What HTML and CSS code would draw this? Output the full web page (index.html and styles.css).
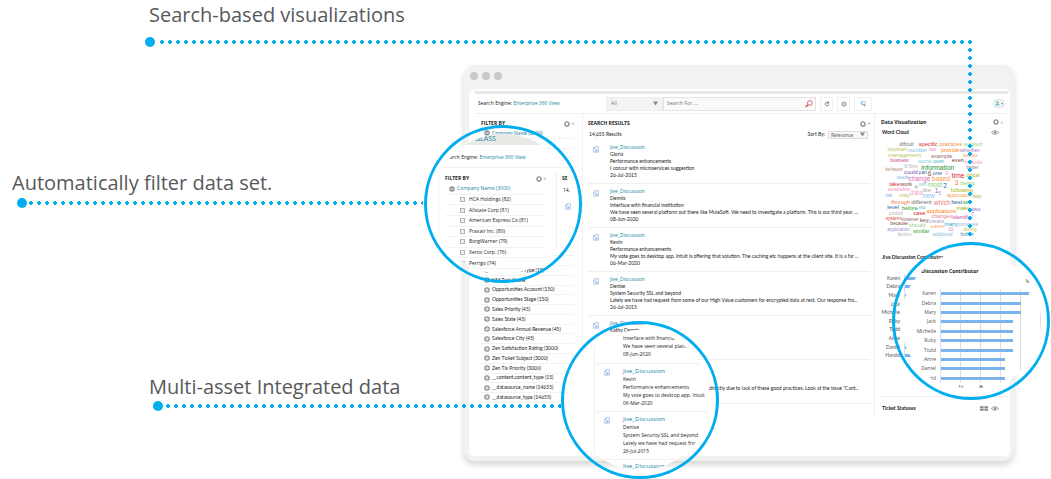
FILE: index.html
```html
<!DOCTYPE html>
<html lang="en">
<head>
<meta charset="utf-8">
<title>Enterprise 360 View</title>
<link rel="stylesheet" href="styles.css">
</head>
<body>
<svg class="defs" aria-hidden="true">
  <symbol id="gear" viewBox="0 0 12 12"><circle cx="6" cy="6" r="4" fill="none" stroke="#8a8a8a" stroke-width="2.200"/><path d="M6 0v2M6 10v2M0 6h2M10 6h2M1.8 1.8l1.4 1.4M8.8 8.8l1.4 1.4M10.2 1.8L8.8 3.2M3.2 8.8l-1.4 1.4" stroke="#8a8a8a" stroke-width="1.8"/></symbol>
  <symbol id="plus" viewBox="0 0 12 12"><circle cx="6" cy="6" r="5.6" fill="#8f8f8f"/><path d="M6 2.5v7M2.5 6h7" stroke="#fff" stroke-width="1.8"/></symbol>
  <symbol id="minus" viewBox="0 0 12 12"><circle cx="6" cy="6" r="5.6" fill="#8f8f8f"/><path d="M2.5 6h7" stroke="#fff" stroke-width="1.8"/></symbol>
  <symbol id="doc" viewBox="0 0 18 20"><path d="M6 1.500H16V18H2V6zM6 2v5H2" fill="#fff" stroke="#6f9bd8" stroke-width="1.600"/><path d="M6 12h7M6 15h8M10 9v6" stroke="#6f9bd8" stroke-width="1.500"/></symbol>
  <symbol id="eye" viewBox="0 0 20 12"><path d="M1 6Q10-3 19 6Q10 15 1 6z" fill="#fff" stroke="#8a8a8a" stroke-width="2"/><circle cx="10" cy="6" r="3" fill="#8a8a8a"/></symbol>
  <symbol id="grid" viewBox="0 0 24 14"><path d="M0 0h11v6H0zM13 0h11v6H13zM0 8h11v6H0zM13 8h11v6H13z" fill="#8a8a8a"/></symbol>
</svg>

<main class="hero">
  <section class="window" aria-label="Product window">
    <div class="dots"><i></i><i></i><i></i></div>
    <div class="app">
      <header class="topbar">
        <div class="engine">Search Engine: <a href="#">Enterprise 360 View</a></div>
        <select class="scope" aria-label="Scope"><option>All</option></select>
        <div class="search">
          <input type="text" placeholder="Search For....." aria-label="Search">
          <button type="button" aria-label="Run search"><svg viewBox="0 0 24 24"><circle cx="14.500" cy="9" r="7" fill="#fff" stroke="#cc4a52" stroke-width="2.500"/><path d="M9 14l-7 7" stroke="#cc4a52" stroke-width="4"/></svg></button>
        </div>
        <button class="tool" type="button" aria-label="Refresh"><svg viewBox="0 0 16 16"><path d="M11.500 4.500A5 5 0 1 0 13 9M12.500 1v5h-5" fill="none" stroke="#777" stroke-width="2.400"/></svg></button>
        <button class="tool" type="button" aria-label="Help"><svg viewBox="0 0 16 16"><circle cx="8" cy="8" r="7" fill="#aaa"/><path d="M4 6h8M4 10h8M8 3v10" stroke="#e6e6e6" stroke-width="1.500"/></svg></button>
        <button class="tool tool-wide" type="button" aria-label="Saved searches"><svg viewBox="0 0 16 16"><path d="M3 2h11v8H3zM1 6h8" fill="none" stroke="#7fb2de" stroke-width="1.800"/><path d="M9 8l5 6" stroke="#2f7fc4" stroke-width="2.500"/></svg></button>
        <div class="account"><button type="button" aria-label="Account"><svg viewBox="0 0 34 24"><circle cx="12" cy="8" r="4" fill="#6cc5d8"/><path d="M4 19q2-8 8-7q6-1 8 7z" fill="#6cc5d8"/><path d="M24 11h7l-3.500 4z" fill="#444"/></svg></button></div>
      </header>

      <div class="body">
        <aside class="filters">
          <div class="bar"><h2>FILTER BY</h2><span class="bar-icons"><svg class="ic"><use href="#gear"/></svg>«</span></div>
          <ul class="filter-list">
            <li class="open"><svg class="ic"><use href="#minus"/></svg>Company Name (3000)</li>
            <li></li><li></li><li></li><li></li><li></li><li></li><li></li><li></li><li></li><li></li><li></li><li></li><li></li>
            <li><svg class="ic"><use href="#plus"/></svg>Opportunities Type (15)</li>
            <li><svg class="ic"><use href="#plus"/></svg>NM Task Name</li>
            <li><svg class="ic"><use href="#plus"/></svg>Opportunities Account (150)</li>
            <li><svg class="ic"><use href="#plus"/></svg>Opportunities Stage (150)</li>
            <li><svg class="ic"><use href="#plus"/></svg>Sales Priority (45)</li>
            <li><svg class="ic"><use href="#plus"/></svg>Sales State (45)</li>
            <li><svg class="ic"><use href="#plus"/></svg>Salesforce Annual Revenue (45)</li>
            <li><svg class="ic"><use href="#plus"/></svg>Salesforce City (45)</li>
            <li><svg class="ic"><use href="#plus"/></svg>Zen Satisfaction Rating (3000)</li>
            <li><svg class="ic"><use href="#plus"/></svg>Zen Ticket Subject (3000)</li>
            <li><svg class="ic"><use href="#plus"/></svg>Zen Tix Priority (3000)</li>
            <li><svg class="ic"><use href="#plus"/></svg>__content.content_type (15)</li>
            <li><svg class="ic"><use href="#plus"/></svg>__datasource_name (14655)</li>
            <li><svg class="ic"><use href="#plus"/></svg>__datasource_type (14655)</li>
          </ul>
        </aside>

        <section class="results">
          <div class="bar"><h2>SEARCH RESULTS</h2><span class="bar-icons"><svg class="ic"><use href="#gear"/></svg><b class="caret"></b></span></div>
          <div class="sortbar"><span>14,655 Results</span><label>Sort By: <select class="sort"><option>Relevance</option></select></label></div>
          <article class="item"><svg class="doc"><use href="#doc"/></svg><div><a href="#">Jive_Discussion</a><p>Gloria</p><p>Performance enhancements</p><p>I concur with microservices suggestion</p><p>26-Jul-2015</p></div></article>
          <article class="item"><svg class="doc"><use href="#doc"/></svg><div><a href="#">Jive_Discussion</a><p>Dennis</p><p>Interface with financial institution</p><p>We have seen several platform out there like MuleSoft. We need to investigate a platform. This is our third year. ...</p><p>08-Jun-2020</p></div></article>
          <article class="item"><svg class="doc"><use href="#doc"/></svg><div><a href="#">Jive_Discussion</a><p>Kevin</p><p>Performance enhancements</p><p>My vote goes to desktop app. Intuit is offering that solution. The caching etc happens at the client site. It is a far ...</p><p>06-Mar-2020</p></div></article>
          <article class="item"><svg class="doc"><use href="#doc"/></svg><div><a href="#">Jive_Discussion</a><p>Denise</p><p>System Security SSL and beyond</p><p>Lately we have had request from some of our High Value customers for encrypted data at rest. Our response fro...</p><p>26-Jul-2015</p></div></article>
          <article class="item"><svg class="doc"><use href="#doc"/></svg><div><a href="#">Jive_Discussion</a><p>Kathy Dennis</p></div></article>
          <article class="item"><div class="tail"><p>directly due to lack of these good practices. Look at the issue "Cant...</p></div></article>
        </section>

        <aside class="viz">
          <div class="bar"><h2>Data Visualization</h2><span class="bar-icons"><svg class="ic"><use href="#gear"/></svg>«</span></div>
          <div class="widget-title"><h3>Word Cloud</h3><svg class="eye"><use href="#eye"/></svg></div>
          <svg class="cloud" viewBox="60 243 320 300" role="img" aria-label="Word Cloud">
            <g class="s">
              <text x="139" y="270" fill="#6f6f6f">difficult</text><text x="111" y="286" fill="#b9c05a">important</text><text x="217" y="285" fill="#f08fc4">two</text><text x="331" y="303" fill="#fb9a4b">service</text><text x="118" y="318" fill="#ce4590">business</text><text x="102" y="344" fill="#b5877d">behavior</text><text x="337" y="338" fill="#7f7f7f">better</text><text x="188" y="354" fill="#2f68a4">part</text><text x="338" y="363" fill="#acad12">critical</text><text x="128" y="369" fill="#83b1e2">needs</text><text x="187" y="390" fill="#7fcfdd">own</text><text x="86" y="424" fill="#83b1e2">risk</text><text x="350" y="425" fill="#acad45">help</text><text x="107" y="478" fill="#b0b0b0">control</text><text x="337" y="481" fill="#9467bd">7</text><text x="99" y="491" fill="#d6402f">system</text><text x="149" y="494" fill="#906a60">however</text><text x="117" y="506" fill="#7c463b">because</text><text x="272" y="524" fill="#e377c2">10</text><text x="330" y="524" fill="#c0bf4a">during</text><text x="115" y="526" fill="#a48fca">application</text><text x="247" y="539" fill="#85c3de">additional</text><text x="321" y="539" fill="#2f7f9e">further</text><text x="133" y="541" fill="#b4b4b4">factors</text>
            </g>
            <g class="m">
              <text x="204" y="270" fill="#d62728">specific</text><text x="272" y="270" fill="#f58a3a">practices</text><text x="339" y="270" fill="#85d375">support</text><text x="172" y="289" fill="#85c3de">number</text><text x="270" y="288" fill="#ff7f0e">provide</text><text x="329" y="288" fill="#a387c6">whether</text><text x="133" y="304" fill="#c0c558">management</text><text x="245" y="307" fill="#906a60">example</text><text x="194" y="320" fill="#7fcfdd">some</text><text x="235" y="320" fill="#3fb1bf">over</text><text x="293" y="318" fill="#7c463b">even</text><text x="340" y="324" fill="#f39cc3">include</text><text x="137" y="337" fill="#9bb9de">8</text><text x="159" y="336" fill="#b4b4b4">first</text><text x="152" y="354" fill="#7a4fa5">could</text><text x="232" y="357" fill="#2f68a4">one</text><text x="259" y="356" fill="#f39cc3">9</text><text x="103" y="391" fill="#d62728">take</text><text x="138" y="391" fill="#7c463b">work</text><text x="168" y="398" fill="#b58c84">4</text><text x="322" y="387" fill="#85d375">being</text><text x="116" y="406" fill="#f39cc3">available</text><text x="200" y="408" fill="#adadad">like</text><text x="239" y="417" fill="#b39ec9">5</text><text x="305" y="407" fill="#acad12">following</text><text x="133" y="423" fill="#c0c558">may</text><text x="296" y="423" fill="#fb9a4b">approach</text><text x="121" y="444" fill="#ea7a50">through</text><text x="184" y="443" fill="#6f6f6f">different</text><text x="290" y="445" fill="#1e5f9e">best</text><text x="319" y="443" fill="#2ca02c">set</text><text x="99" y="460" fill="#1e5f9e">level</text><text x="149" y="462" fill="#2ca02c">before</text><text x="186" y="459" fill="#3fb1bf">no</text><text x="309" y="462" fill="#acad12">make</text><text x="348" y="466" fill="#9467bd">two</text><text x="178" y="477" fill="#d62728">case</text><text x="244" y="470" fill="#ff7f0e">applications</text><text x="245" y="487" fill="#ee7f90">changes</text><text x="304" y="489" fill="#d04ca0">identify</text><text x="192" y="498" fill="#7c463b">key</text><text x="229" y="502" fill="#b39ec9">create</text><text x="273" y="509" fill="#1fa5b5">many</text><text x="325" y="509" fill="#9bb9de">process</text><text x="171" y="513" fill="#8fd085">should</text><text x="232" y="516" fill="#fbab70">same</text><text x="183" y="531" fill="#2ca02c">similar</text>
            </g>
            <g class="l">
              <text x="233" y="341" fill="#2c8f2c">information</text><text x="208" y="360" fill="#8c564b">6</text><text x="294" y="365" fill="#d62728">time</text><text x="178" y="375" fill="#e066bb">change</text><text x="242" y="376" fill="#fb9a4b">based</text><text x="225" y="394" fill="#85d375">most</text><text x="255" y="395" fill="#1e5f9e">2</text><text x="289" y="386" fill="#ff7f0e">3</text><text x="168" y="416" fill="#f5a5c8">data</text><text x="229" y="412" fill="#9467bd">1</text><text x="206" y="427" fill="#94bbe8">new</text><text x="246" y="448" fill="#ee7f7a">which</text>
            </g>
          </svg>
          <div class="widget-title contrib"><h3>Jive Discussion Contributor</h3></div>
          <div class="chart">
            <div class="bar-row"><span>Karen</span><div><i style="width:88%"></i></div></div>
            <div class="bar-row"><span>Debra</span><div><i style="width:80%"></i></div></div>
            <div class="bar-row"><span>Mary</span><div><i style="width:80%"></i></div></div>
            <div class="bar-row"><span>Jack</span><div><i style="width:72%"></i></div></div>
            <div class="bar-row"><span>Michelle</span><div><i style="width:72%"></i></div></div>
            <div class="bar-row"><span>Ruby</span><div><i style="width:72%"></i></div></div>
            <div class="bar-row"><span>Todd</span><div><i style="width:72%"></i></div></div>
            <div class="bar-row"><span>Anne</span><div><i style="width:64%"></i></div></div>
            <div class="bar-row"><span>Daniel</span><div><i style="width:64%"></i></div></div>
            <div class="bar-row"><span>Harold</span><div><i style="width:64%"></i></div></div>
          </div>
          <div class="widget-title tickets"><h3>Ticket Statuses</h3><span><svg class="tiles"><use href="#grid"/></svg><svg class="eye"><use href="#eye"/></svg></span></div>
        </aside>
      </div>
    </div>
  </section>

  <h1 class="callout callout-search">Search-based visualizations</h1>
  <div class="lead lead-search"></div>
  <div class="drop"></div>
  <h1 class="callout callout-filter">Automatically filter data set.</h1>
  <div class="lead lead-filter"></div>
  <h1 class="callout callout-data">Multi-asset Integrated data</h1>
  <div class="lead lead-data"></div>

  <div class="lens lens-filter">
    <div class="disc">
      <div class="brand">GLASS</div>
      <div class="engine">Search Engine: <a href="#">Enterprise 360 View</a></div>
      <div class="zoom-body">
        <div class="zoom-filters">
          <div class="bar"><h2>FILTER BY</h2><span class="bar-icons"><svg class="ic"><use href="#gear"/></svg>«</span></div>
          <ul class="filter-list">
            <li class="open"><svg class="ic"><use href="#minus"/></svg>Company Name (3000)</li>
            <li><label><input type="checkbox">HCA Holdings (82)</label></li>
            <li><label><input type="checkbox">Allstate Corp (81)</label></li>
            <li><label><input type="checkbox">American Express Co (81)</label></li>
            <li><label><input type="checkbox">Praxair Inc. (80)</label></li>
            <li><label><input type="checkbox">BorgWarner (79)</label></li>
            <li><label><input type="checkbox">Xerox Corp. (76)</label></li>
            <li><label><input type="checkbox">Perrigo (74)</label></li>
          </ul>
        </div>
        <div class="zoom-side"><h2>SE</h2><p>14,</p><svg class="doc"><use href="#doc"/></svg></div>
      </div>
    </div>
  </div>

  <div class="lens lens-data">
    <div class="disc">
      <div class="zoom-results">
        <article class="item"><div><p>Interface with financial</p><p>We have seen several platform</p><p>08-Jun-2020</p></div></article>
        <article class="item"><svg class="doc"><use href="#doc"/></svg><div><a href="#">Jive_Discussion</a><p>Kevin</p><p>Performance enhancements</p><p>My vote goes to desktop app. Intuit</p><p>06-Mar-2020</p></div></article>
        <article class="item"><svg class="doc"><use href="#doc"/></svg><div><a href="#">Jive_Discussion</a><p>Denise</p><p>System Security SSL and beyond</p><p>Lately we have had request from</p><p>26-Jul-2015</p></div></article>
        <article class="item"><div><a href="#">Jive_Discussion</a></div></article>
      </div>
    </div>
  </div>

  <div class="lens lens-chart">
    <div class="disc">
      <h3>Jive Discussion Contributor</h3>
      <div class="unit">%</div>
      <div class="chart">
        <div class="bar-row"><span>Karen</span><div><i style="width:88%"></i></div></div>
        <div class="bar-row"><span>Debra</span><div><i style="width:80%"></i></div></div>
        <div class="bar-row"><span>Mary</span><div><i style="width:80%"></i></div></div>
        <div class="bar-row"><span>Jack</span><div><i style="width:72%"></i></div></div>
        <div class="bar-row"><span>Michelle</span><div><i style="width:72%"></i></div></div>
        <div class="bar-row"><span>Ruby</span><div><i style="width:72%"></i></div></div>
        <div class="bar-row"><span>Todd</span><div><i style="width:72%"></i></div></div>
        <div class="bar-row"><span>Anne</span><div><i style="width:64%"></i></div></div>
        <div class="bar-row"><span>Daniel</span><div><i style="width:64%"></i></div></div>
        <div class="bar-row"><span>Harold</span><div><i style="width:64%"></i></div></div>
      </div>
      <div class="scale"><span>2</span><span>4</span></div>
    </div>
  </div>
</main>
</body>
</html>
```
FILE: styles.css
```css
* { box-sizing: border-box; }
body { margin: 0; background: #fff; color: #222; font-family: "Open Sans", sans-serif; font-size: 5px; line-height: 7px; }
h1, h2, h3, p, ul { margin: 0; padding: 0; }
ul { list-style: none; }
a { color: #1485a0; text-decoration: none; }
button, input, select { font: inherit; color: inherit; margin: 0; padding: 0; border: 0; background: none; appearance: none; border-radius: 0; }
svg { display: block; flex: none; }
.defs { position: absolute; width: 0; height: 0; }

.hero { position: relative; min-width: 1051px; padding: 65px 37px 20px 464px; overflow: hidden; }

/* product window */
.window { background: #f2f2f2; border-radius: 11px; padding: 0 4px 5px 5px; box-shadow: 0 4px 6px rgba(0, 0, 0, .16); }
.dots { display: flex; gap: 4px; padding: 7px 1px 9px; }
.dots i { width: 8px; height: 8px; border-radius: 50%; background: #cacaca; }
.app { background: #fff; border-radius: 5px; padding: 2px 2px 41px 6px; }
.topbar { display: flex; align-items: center; height: 23px; border-top: 3px solid #e7e8e3; border-bottom: 1px solid #f0f0f0; }
.topbar .engine { width: 131px; padding-left: 3px; }
.scope { width: 57px; height: 14px; padding: 0 4px; color: #777; border: 1px solid #eee; background: #f3f3f3 url("data:image/svg+xml,%3Csvg xmlns='http://www.w3.org/2000/svg' viewBox='0 0 6 5'%3E%3Cpath d='M0 0h6L3 5z' fill='%23888'/%3E%3C/svg%3E") no-repeat right 4px center / 5px 5px; }
.search { display: flex; flex: 1; align-items: center; height: 14px; margin-right: 4px; border: 1px solid #e3e3e3; background: #fafafa; }
.search input { flex: 1; padding-left: 3px; }
.search input::placeholder { color: #777; }
.search button { width: 8px; margin-right: 2px; }
.tool { display: grid; place-items: center; width: 13px; height: 14px; margin-right: 4px; border: 1px solid #eee; }
.tool svg { width: 6px; height: 6px; }
.tool-wide { width: 18px; margin-right: 2px; }
.account { display: flex; justify-content: flex-end; width: 134px; padding-right: 3px; }
.account button { width: 12px; height: 9px; border: 1px solid #ddd; border-radius: 5px; background: #f6f6f6; }

.body { display: grid; grid-template-columns: 108px 1fr 134px; }
.bar { display: flex; align-items: center; justify-content: space-between; height: 11px; }
.bar h2, .zoom-side h2 { font-size: 5px; line-height: 7px; font-weight: 700; }
.bar-icons { display: flex; align-items: center; gap: 2px; color: #888; }
.ic { width: 6px; height: 6px; }
.caret { border: 1px solid transparent; border-top-color: #333; }

.filters { display: flex; flex-direction: column; padding: 4px 8px 12px 6px; border-right: 1px solid #f0f0f0; font-family: Lato, sans-serif; }
.filters h2 { font-family: "Open Sans", sans-serif; }
.filter-list { display: flex; flex: 1; flex-direction: column; }
.filter-list li { display: flex; flex: 1; align-items: center; gap: 2px; padding-left: 3px; min-height: 0; border-bottom: 1px solid #f3f3f3; }
.filter-list .open { color: #1485a0; }

.results { min-width: 0; padding: 4px 4px 8px 5px; }
.sortbar { display: flex; justify-content: space-between; align-items: center; height: 11px; padding: 0 2px 0 1px; font-family: Lato, sans-serif; }
.sortbar label { display: flex; align-items: center; gap: 3px; }
.sort { width: 40px; height: 8px; padding-left: 2px; color: #666; border: 1px solid #ddd; background: #f8f8f8 url("data:image/svg+xml,%3Csvg xmlns='http://www.w3.org/2000/svg' viewBox='0 0 6 5'%3E%3Cpath d='M0 0h6L3 5z' fill='%23888'/%3E%3C/svg%3E") no-repeat right 2px center / 5px 5px; }
.item { display: flex; gap: 11px; height: 44px; padding: 4px 0 0 5px; border-bottom: 1px solid #f0f0f0; line-height: 7px; white-space: nowrap; }
.item > div { flex: 1; min-width: 0; }
.item a { display: block; }
.results .item p { font-family: Lato, sans-serif; }
.item .doc, .zoom-side .doc { width: 6px; height: 7px; }
.item .doc { margin-top: 2px; }
.item .tail { padding: 21px 11px 0 0; text-align: right; }

.viz { display: flex; flex-direction: column; padding: 2px 0 1px 5px; border-left: 1px solid #f0f0f0; }
.viz .bar { height: 12px; padding: 0 5px 0 1px; }
.widget-title { display: flex; align-items: center; justify-content: space-between; height: 9px; padding: 0 9px 0 2px; }
.widget-title span { display: flex; gap: 3px; }
h3 { font: 700 5px/7px Lato, sans-serif; color: #222; }
.eye { width: 8px; height: 5px; }
.tiles { width: 8px; height: 5px; }
.cloud { width: 107px; height: 100px; }
.cloud text { text-anchor: middle; font-family: "Liberation Sans", sans-serif; }
.s { font-size: 14px; }
.m { font-size: 17px; }
.l { font-size: 20px; }
.contrib { margin-top: 16px; }
.chart { display: flex; flex-direction: column; }
.viz .chart { height: 86px; margin: 12px 5px 36px 0; }
.bar-row { display: flex; flex: 1; min-height: 0; }
.bar-row span { display: flex; align-items: center; justify-content: flex-end; width: 20px; color: #555; font-family: Lato, sans-serif; }
.bar-row div { display: flex; flex: 1; align-items: center; margin-left: 4px; border-left: 1px solid #d5dff0; }
.bar-row i { height: 3px; background: #7db3ec; }
.tickets { height: 18px; border-top: 1px solid #eee; padding-top: 6px; }

/* callouts */
.callout { position: absolute; font-size: 20px; line-height: 28px; font-weight: 400; color: #58595b; white-space: nowrap; }
.callout-search { left: 149px; top: 1px; }
.callout-filter { left: 12px; top: 169px; }
.callout-data { left: 149px; top: 373px; }
.lead, .drop { position: absolute; background: radial-gradient(circle at center, #00aeef 0 2px, transparent 2px) 0 0 / 8px 8px; }
.lead { height: 8px; }
.lead::before { content: ""; position: absolute; left: -14px; top: -1px; width: 10px; height: 10px; border-radius: 50%; background: #00aeef; }
.lead-search { left: 158px; right: 77px; top: 38px; }
.lead-search::before { left: -13px; }
.drop { right: 77px; top: 46px; width: 8px; height: 192px; }
.lead-filter { left: 27px; width: 396px; top: 199px; }
.lead-filter::before { left: -10px; }
.lead-data { left: 164px; width: 397px; top: 402px; }
.lead-data::before { left: -11px; }

/* magnifier lenses */
.lens { position: absolute; width: 158px; height: 158px; padding: 6px; border: 3px solid #00aeef; border-radius: 50%; }
.disc { width: 140px; height: 140px; border-radius: 50%; overflow: hidden; background: #fff; }
.lens-filter { left: 424px; top: 125px; }
.lens-data { left: 561px; top: 321px; }
.lens-chart { right: 1px; top: 242px; }

.brand { height: 11px; padding-left: 42px; background: #e9e9e6; color: #1485a0; font-size: 7px; line-height: 9px; }
.disc .engine { height: 23px; padding: 9px 0 0 11px; border-bottom: 1px solid #f0f0f0; }
.zoom-body { display: flex; padding: 5px 0 0 5px; }
.zoom-filters { flex: none; width: 119px; padding: 0 10px 0 6px; border-right: 1px solid #eee; border-left: 1px solid #f4f4f4; }
.zoom-filters .filter-list { height: 85px; }
.zoom-filters li:first-child { padding-left: 4px; }
.zoom-filters li { padding-left: 15px; }
.zoom-filters label { display: flex; align-items: center; gap: 4px; }
.zoom-filters input { width: 5px; height: 5px; border: 1px solid #b5b5b5; background: #eee; }
.zoom-side { padding: 2px 0 0 5px; }
.zoom-side p { padding: 5px 0 0 1px; }
.zoom-side .doc { margin: 9px 0 0 3px; }

.zoom-results { margin: 0 0 0 24px; border-left: 1px solid #f0f0f0; }
.zoom-results .item { height: 48px; padding: 3px 0 0 9px; gap: 13px; line-height: 8px; }
.zoom-results .item a { font-size: 6px; }
.zoom-results .item:first-child { height: 34px; padding: 4px 0 0 28px; }
.zoom-results .item:last-child { padding: 2px 0 0 28px; border: 0; }

.lens-chart h3 { padding: 17px 0 0 10px; font-family: "Open Sans", sans-serif; }
.unit { padding: 3px 11px 0 0; text-align: right; line-height: 7px; }
.lens-chart .chart { height: 94px; margin-top: 4px; }
.lens-chart .bar-row span { width: 35px; font-family: "Open Sans", sans-serif; }
.lens-chart .bar-row div { background: repeating-linear-gradient(90deg, transparent 0 19px, #ddd 19px 20px); }
.scale { display: flex; gap: 17px; padding-left: 58px; }
.scale span { transform: rotate(90deg); }
```
